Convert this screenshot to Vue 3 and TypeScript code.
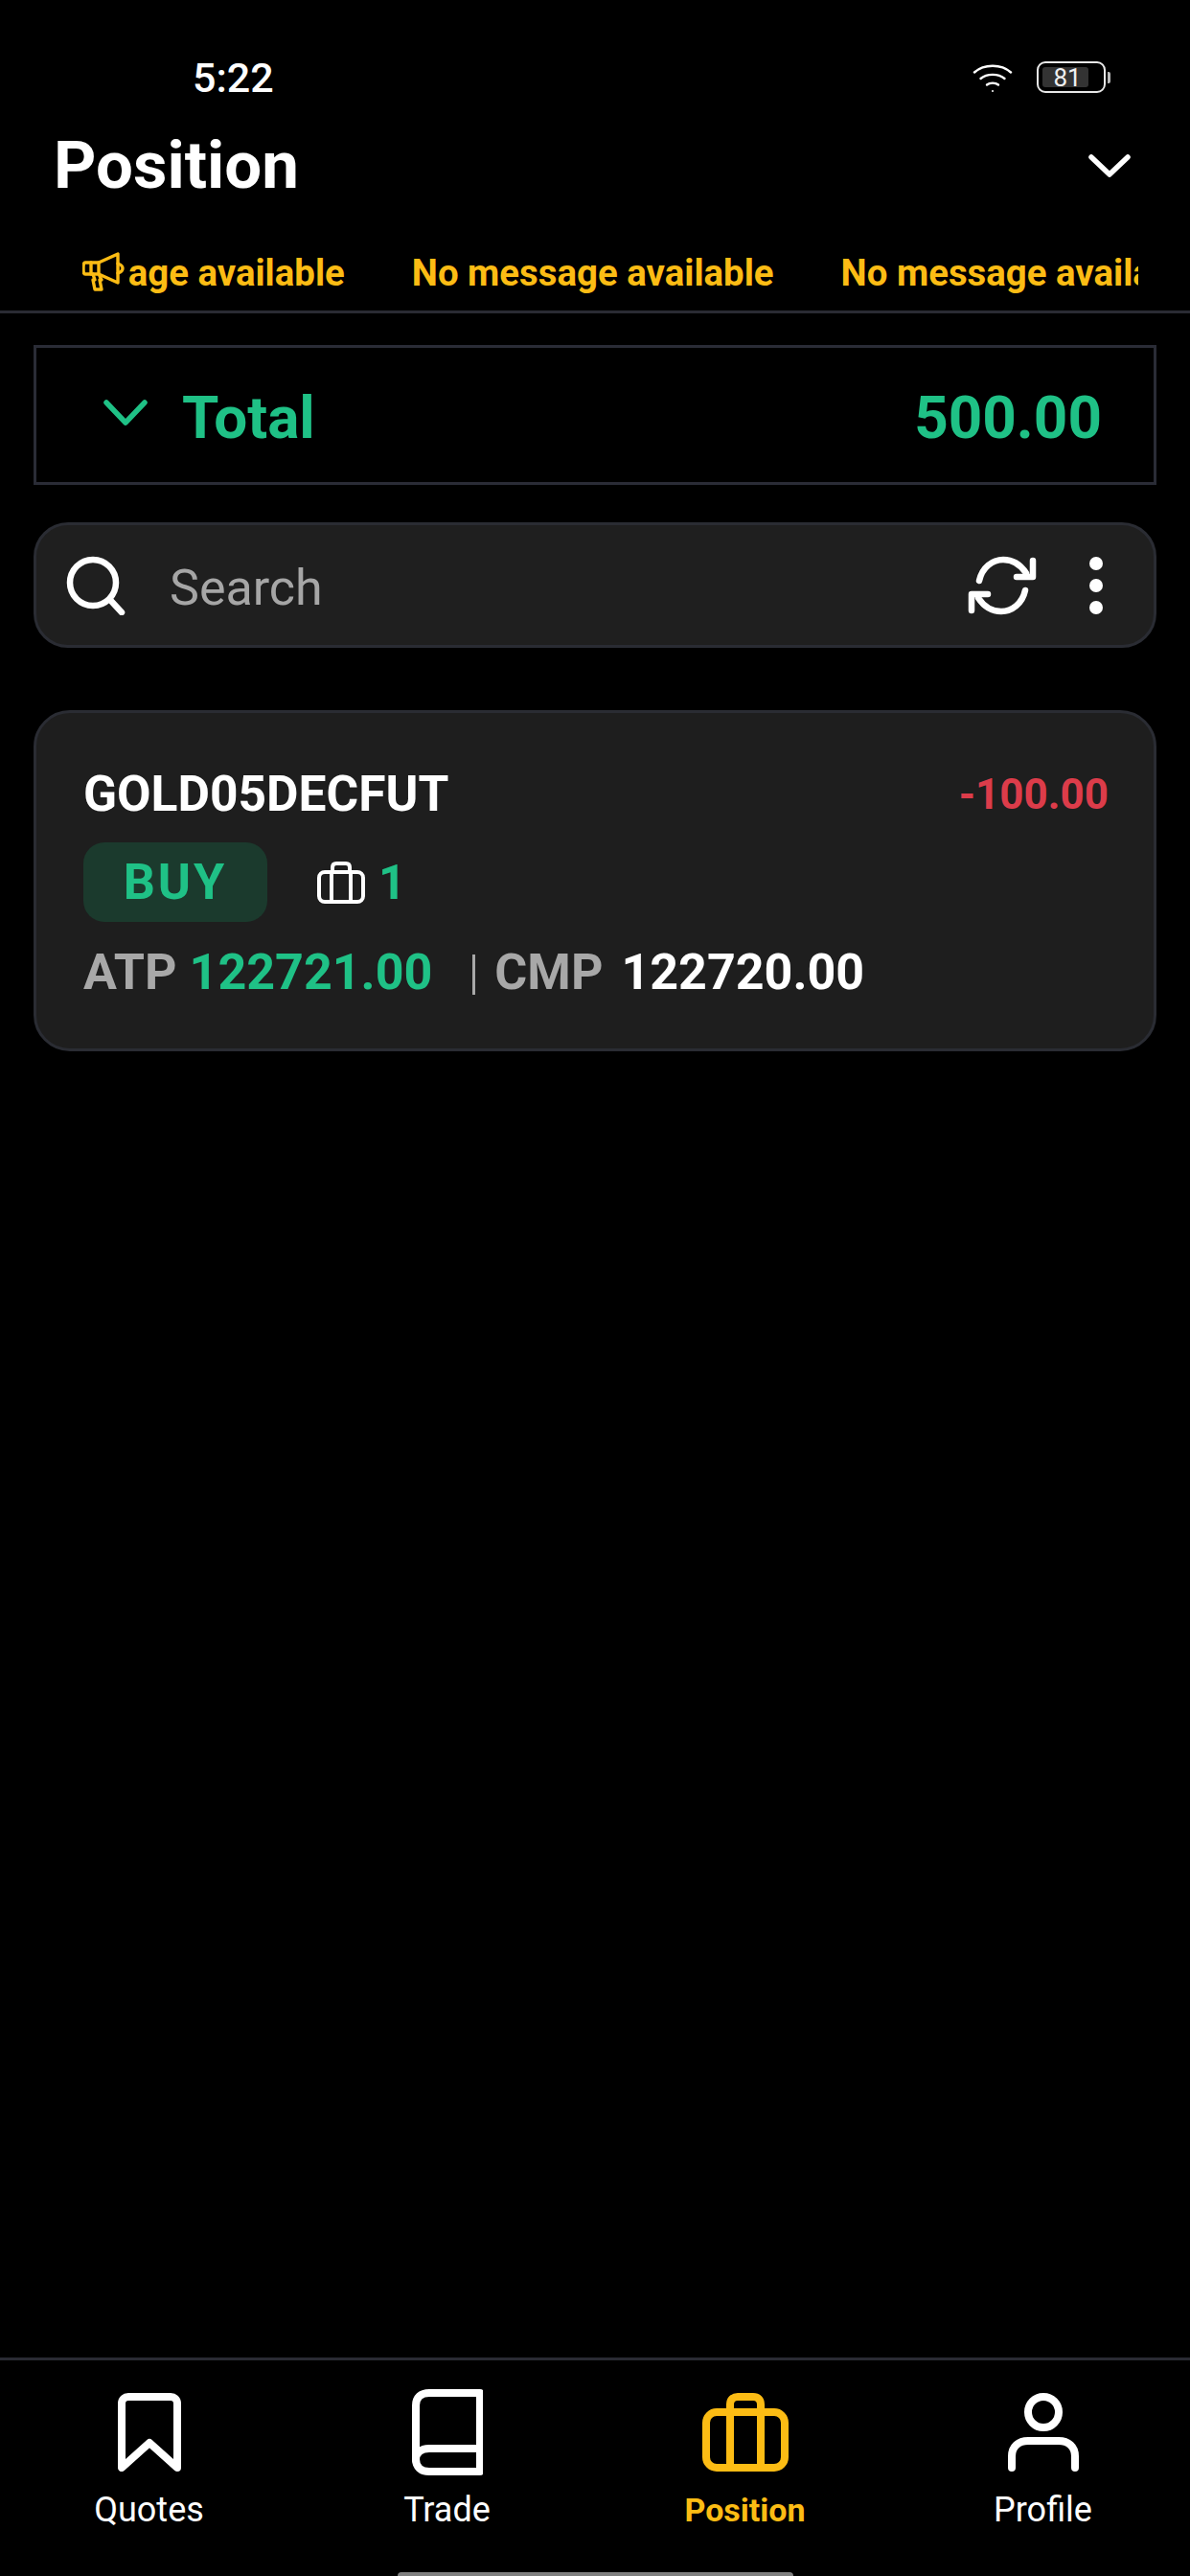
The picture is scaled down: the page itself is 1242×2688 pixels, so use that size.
<script setup lang="ts">
const tabs = [
  { label: 'Quotes', key: 'quotes' },
  { label: 'Trade', key: 'trade' },
  { label: 'Position', key: 'position' },
  { label: 'Profile', key: 'profile' },
];
const messages = ['No message available', 'No message available', 'No message available'];
</script>

<template>
  <div class="screen">
    <div class="status">
      <span class="time">5:22</span>
      <div class="status-right">
        <svg class="wifi" width="42" height="32" viewBox="0 0 42 32" fill="none" stroke="#fff" stroke-width="2.4" stroke-linecap="round">
          <path d="M2 10.5C12 1.5 30 1.5 40 10.5" />
          <path d="M8.5 17C15 11.5 27 11.5 33.5 17" />
          <path d="M15 23.5C18 21 24 21 27 23.5" />
          <circle cx="21" cy="30" r="1" fill="#fff" stroke="none" />
        </svg>
        <div class="battery">
          <div class="battery-fill"></div>
          <span class="battery-num">81</span>
        </div>
        <div class="battery-tip"></div>
      </div>
    </div>

    <div class="title-row">
      <h1 class="title">Position</h1>
      <svg width="44" height="24" viewBox="0 0 44 24" fill="none" stroke="#fff" stroke-width="5.5" stroke-linecap="round" stroke-linejoin="round">
        <path d="M3 3L22 21L41 3" />
      </svg>
    </div>

    <div class="ticker-row">
      <svg class="megaphone" width="44" height="42" viewBox="0 0 44 42" fill="none" stroke="#fcbc14" stroke-width="3.4" stroke-linejoin="round" stroke-linecap="round">
        <path d="M3 11H17L37 2V32L17 23H3C1.5 23 1 21.5 1 17C1 12.5 1.5 11 3 11Z" />
        <path d="M9 11V23M17 11V23" />
        <path d="M37 12C40 13 42 15 42 17C42 19 40 21 37 22" />
        <path d="M11 23L13 29H11L13 39H20L18 29H20L18 25" />
      </svg>
      <div class="ticker">
        <div class="ticker-track">
          <span v-for="(m, i) in messages" :key="i" class="ticker-item">{{ m }}</span>
        </div>
      </div>
    </div>

    <div class="total">
      <div class="total-left">
        <svg width="46" height="28" viewBox="0 0 46 28" fill="none" stroke="#1fc186" stroke-width="5.5" stroke-linecap="round" stroke-linejoin="round">
          <path d="M3 3L23 24L43 3" />
        </svg>
        <span>Total</span>
      </div>
      <span>500.00</span>
    </div>

    <div class="search">
      <svg class="search-icon" width="62" height="62" viewBox="0 0 62 62" fill="none" stroke="#fff" stroke-width="6.5" stroke-linecap="round">
        <circle cx="28" cy="28" r="24" />
        <path d="M46 46L58 59" />
      </svg>
      <span class="search-text">Search</span>
      <svg class="refresh" width="72" height="62" viewBox="0 0 72 62" fill="none" stroke="#fff" stroke-width="6.5" stroke-linecap="round" stroke-linejoin="round">
        <path d="M12 26C15 12 26 4 37 4C47 4 55 9 61 18" />
        <path d="M68 5V22H51" />
        <path d="M60 36C57 50 46 58 35 58C25 58 17 53 11 44" />
        <path d="M4 57V40H21" />
      </svg>
      <div class="dots"><i></i><i></i><i></i></div>
    </div>

    <div class="card">
      <div class="card-top">
        <span class="symbol">GOLD05DECFUT</span>
        <span class="pnl">-100.00</span>
      </div>
      <div class="card-mid">
        <span class="buy">BUY</span>
        <svg class="bag" width="50" height="44" viewBox="0 0 50 44" fill="none" stroke="#fff" stroke-width="4" stroke-linejoin="round">
          <rect x="2" y="11" width="46" height="31" rx="6" />
          <path d="M16 11V6C16 3.5 17.5 2 20 2H30C32.5 2 34 3.5 34 6V11" />
          <path d="M15 11V42M35 11V42" />
        </svg>
        <span class="qty">1</span>
      </div>
      <div class="card-bottom">
        <span class="muted">ATP</span>
        <span class="atp">122721.00</span>
        <span class="sep"></span>
        <span class="muted">CMP</span>
        <span class="cmp">122720.00</span>
      </div>
    </div>

    <div class="spacer"></div>

    <nav class="tabs">
      <div v-for="t in tabs" :key="t.key" class="tab" :class="{ active: t.key === 'position' }">
        <div class="tab-icon">
          <svg v-if="t.key === 'quotes'" width="66" height="82" viewBox="0 0 66 82" fill="none" stroke="#fff" stroke-width="8" stroke-linejoin="round" stroke-linecap="round">
            <path d="M4 78V11C4 6.5 7 4 11 4H55C59 4 62 6.5 62 11V78L33 52L4 78Z" />
          </svg>
          <svg v-else-if="t.key === 'trade'" width="74" height="90" viewBox="0 0 74 90" fill="none" stroke="#fff" stroke-width="8" stroke-linejoin="round" stroke-linecap="round">
            <path d="M71 4H18C9 4 4 9 4 17V73C4 81 9 86 18 86H71V4Z" />
            <path d="M71 62H18C9 62 4 67 4 74" />
          </svg>
          <svg v-else-if="t.key === 'position'" width="90" height="82" viewBox="0 0 90 82" fill="none" stroke="#fcbc14" stroke-width="8" stroke-linejoin="round">
            <rect x="4" y="20" width="82" height="58" rx="11" />
            <path d="M29 20V12C29 7 32 4 37 4H53C58 4 61 7 61 12V20" />
            <path d="M29 20V78M61 20V78" />
          </svg>
          <svg v-else width="74" height="82" viewBox="0 0 74 82" fill="none" stroke="#fff" stroke-width="8" stroke-linecap="round">
            <circle cx="37" cy="20" r="16" />
            <path d="M4 78V66C4 56 11 50 21 50H53C63 50 70 56 70 66V78" />
          </svg>
        </div>
        <span class="tab-label">{{ t.label }}</span>
      </div>
    </nav>
    <div class="home-wrap"><div class="home"></div></div>
  </div>
</template>

<style>
html, body { margin: 0; background: #000; }
</style>

<style scoped>
.screen {
  width: 1242px;
  height: 2688px;
  background: #000;
  color: #fff;
  font-family: Roboto, "Liberation Sans", sans-serif;
  display: flex;
  flex-direction: column;
  overflow: hidden;
}
.status {
  height: 130px;
  box-sizing: border-box;
  display: flex;
  justify-content: space-between;
  align-items: flex-start;
  padding: 56px 83px 0 201px;
}
.time { font-size: 43px; line-height: 50px; font-weight: 500; color: #fff; }
.status-right { display: flex; align-items: center; margin-top: 8px; }
.wifi { margin-right: 25px; }
.battery {
  position: relative;
  width: 72px;
  height: 33px;
  box-sizing: border-box;
  border: 2px solid #e8e8e8;
  border-radius: 9px;
  display: flex;
  align-items: center;
  justify-content: center;
}
.battery-fill { position: absolute; left: 4px; top: 4px; bottom: 4px; width: 48px; background: #333; border-radius: 3px; }
.battery-num { position: relative; font-size: 26px; line-height: 1; color: #f0f0f0; margin-right: 8px; }
.battery-tip { width: 3px; height: 12px; background: #bbb; margin-left: 2px; border-radius: 0 2px 2px 0; }

.title-row {
  height: 88px;
  display: flex;
  justify-content: space-between;
  align-items: center;
  padding: 0 62px 0 56px;
  margin-top: -1px;
}
.title { margin: 0; font-size: 69px; font-weight: 700; line-height: 88px; }

.ticker-row {
  height: 110px;
  box-sizing: border-box;
  border-bottom: 3px solid #2a2b33;
  display: flex;
  align-items: flex-start;
  padding: 46px 54px 0 86px;
  margin-bottom: 33px;
}
.megaphone { flex: none; margin-right: 5px; }
.ticker { flex: 1; overflow: hidden; }
.ticker-track { display: flex; gap: 70px; margin-left: -153px; white-space: nowrap; }
.ticker-item { font-size: 38.4px; line-height: 44px; font-weight: 700; color: #fcbc14; flex: none; }

.total {
  height: 146px;
  margin: 0 35px;
  box-sizing: border-box;
  border: 3px solid #2a2c36;
  display: flex;
  justify-content: space-between;
  align-items: flex-start;
  padding: 37px 54px 0 70px;
  color: #1fc186;
  font-size: 62px;
  line-height: 72px;
  font-weight: 700;
}
.total-left { display: flex; align-items: flex-start; gap: 36px; }
.total-left svg { margin-top: 17px; }

.search {
  height: 131px;
  margin: 39px 35px 0;
  box-sizing: border-box;
  background: #1f1f1f;
  border: 3px solid #2a2c33;
  border-radius: 36px;
  display: flex;
  align-items: center;
  padding: 0 53px 0 31px;
}
.search-text { flex: 1; margin-left: 46px; margin-top: 5px; font-size: 52px; color: #a6a6a6; }
.dots { display: flex; flex-direction: column; gap: 9px; margin-left: 55px; }
.dots i { display: block; width: 14px; height: 14px; border-radius: 50%; background: #fff; }

.card {
  height: 356px;
  margin: 65px 35px 0;
  box-sizing: border-box;
  background: #1e1e1e;
  border: 3px solid #2a2c33;
  border-radius: 38px;
  padding: 55px 47px 0 49px;
  display: flex;
  flex-direction: column;
}
.card-top { display: flex; justify-content: space-between; align-items: center; height: 60px; }
.symbol { font-size: 51.5px; font-weight: 700; line-height: 60px; }
.pnl { font-size: 44px; font-weight: 700; color: #dc3c4a; }
.card-mid { display: flex; align-items: center; margin-top: 20px; height: 83px; }
.buy {
  width: 192px;
  height: 83px;
  border-radius: 22px;
  background: #1b3a2d;
  color: #1fc186;
  font-size: 52px;
  font-weight: 700;
  letter-spacing: 3px;
  display: flex;
  align-items: center;
  justify-content: center;
}
.bag { margin-left: 52px; }
.qty { margin-left: 14px; font-size: 50px; font-weight: 700; color: #1fc186; }
.card-bottom { display: flex; align-items: center; margin-top: 22px; height: 60px; font-size: 52px; font-weight: 700; }
.muted { color: #a8a8a8; }
.atp { color: #1fc186; margin-left: 13px; }
.sep { width: 3px; height: 42px; background: #a8a8a8; margin: 6px 20px 0 42px; }
.cmp { color: #fff; margin-left: 19px; }

.spacer { flex: 1; }

.tabs {
  height: 224px;
  box-sizing: border-box;
  border-top: 3px solid #2a2b33;
  display: grid;
  grid-template-columns: repeat(4, 311px);
  padding: 30px 0 0;
}
.tab { display: flex; flex-direction: column; align-items: center; }
.tab-icon { height: 90px; display: flex; align-items: center; justify-content: center; }
.tab-label { margin-top: 14px; font-size: 36px; line-height: 44px; color: #fff; }
.tab.active .tab-label { color: #fcbc14; font-weight: 700; font-size: 34px; }
.home-wrap { height: 4px; display: flex; justify-content: center; }
.home { width: 413px; height: 4px; background: #808080; border-radius: 4px 4px 0 0; }
</style>
